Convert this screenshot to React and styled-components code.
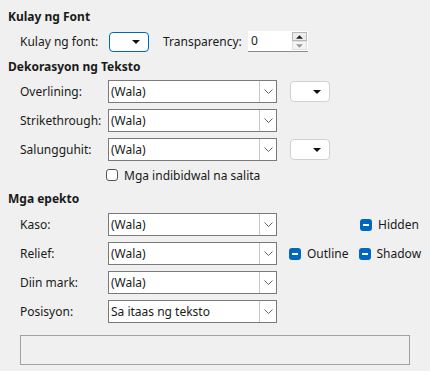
import React from "react"
import styled, { createGlobalStyle } from 'styled-components'

const GlobalStyle = createGlobalStyle`
    html, body {
        margin: 0;
        padding: 0;
        background: #f0f0f0;
    }
    body {
        font-family: "Noto Sans", "Open Sans", sans-serif;
        font-size: 12px;
        color: #1a1a1a;
    }
`

const Panel = styled.div`
    width: 430px;
    height: 371px;
    box-sizing: border-box;
    padding: 9px 20px 0 8px;
    display: flex;
    flex-direction: column;
`

const Heading = styled.div`
    font-weight: bold;
    height: 16px;
    line-height: 16px;
    margin-top: ${p => p.$top || 0}px;
`

const Rows = styled.div`
    display: flex;
    flex-direction: column;
    gap: ${p => p.$gap ?? 6}px;
    padding-left: 12px;
    margin-top: ${p => p.$top || 0}px;
`

const Row = styled.div`
    display: grid;
    grid-template-columns: 88px 169px auto;
    align-items: center;
    height: ${p => p.$h || 23}px;
`

const Label = styled.span`
    line-height: 16px;
`

const Extra = styled.div`
    display: flex;
    align-items: center;
    margin-left: ${p => p.$left || 13}px;
    gap: 10px;
`

const Combo = styled.div`
    box-sizing: border-box;
    height: 23px;
    border: 1px solid #7a7a7a;
    background: #fff;
    display: flex;
    align-items: stretch;
`

const ComboText = styled.span`
    flex: 1;
    padding-left: 2px;
    line-height: 21px;
    white-space: nowrap;
`

const ComboButton = styled.div`
    width: 17px;
    box-sizing: border-box;
    border-left: 1px solid #c8c8c8;
    display: flex;
    align-items: center;
    justify-content: center;
    background: #fff;
`

const ColorButton = styled.div`
    box-sizing: border-box;
    width: 40px;
    height: ${p => p.$h || 21}px;
    border: 1px solid ${p => p.$focus ? '#0067c0' : '#d0d0d0'};
    border-radius: 4px;
    background: #fff;
    display: flex;
    align-items: center;
    justify-content: flex-end;
    padding-right: 8px;
`

const FontRow = styled.div`
    display: flex;
    align-items: center;
    height: 21px;
    padding-left: 12px;
    margin-top: 6px;
`

const FontLabel = styled.span`
    width: 89px;
`

const TransLabel = styled.span`
    margin-left: 14px;
    width: 85px;
`

const Spin = styled.div`
    box-sizing: border-box;
    width: 60px;
    height: 21px;
    background: #fff;
    border-bottom: 1px solid #8a8a8a;
    display: flex;
`

const SpinValue = styled.span`
    flex: 1;
    padding-left: 3px;
    line-height: 20px;
`

const SpinButtons = styled.div`
    width: 16px;
    display: flex;
    flex-direction: column;
    padding: 1px 1px 1px 0;
    box-sizing: border-box;
`

const SpinHalf = styled.div`
    flex: 1;
    box-sizing: border-box;
    border: 1px solid ${p => p.$dim ? '#e0e0e0' : '#b8b8b8'};
    background: ${p => p.$dim ? '#f4f4f4' : '#ececec'};
    display: flex;
    align-items: center;
    justify-content: center;
`

const Check = styled.span`
    box-sizing: border-box;
    width: 12px;
    height: 12px;
    border: 1px solid #555;
    border-radius: 3px;
    background: #fff;
`

const TriCheck = styled.span`
    width: 12px;
    height: 12px;
    border-radius: 3px;
    background: #0067c0;
    display: flex;
    align-items: center;
    justify-content: center;
    &::after {
        content: "";
        width: 6px;
        height: 2px;
        background: #fff;
    }
`

const CheckLabel = styled.label`
    display: flex;
    align-items: center;
    gap: 6px;
    white-space: nowrap;
`

const CheckRow = styled.div`
    display: flex;
    align-items: center;
    height: 16px;
    padding-left: 98px;
    margin-top: 6px;
`

const Preview = styled.div`
    box-sizing: border-box;
    margin: 12px 0 0 12px;
    width: 390px;
    height: 30px;
    border: 1px solid #a0a0a0;
`

const Chevron = () => (
    <svg width="9" height="5" viewBox="0 0 9 5">
        <path d="M0.5 0.5 L4.5 4.5 L8.5 0.5" fill="none" stroke="#666" strokeWidth="1" />
    </svg>
)

const Caret = ({ color = '#111', w = 8, h = 4 }) => (
    <svg width={w} height={h} viewBox="0 0 8 4">
        <path d="M0 0 H8 L4 4 Z" fill={color} />
    </svg>
)

const CaretUp = () => (
    <svg width="7" height="4" viewBox="0 0 8 4">
        <path d="M0 4 H8 L4 0 Z" fill="#222" />
    </svg>
)

const Select = ({ value }) => (
    <Combo>
        <ComboText>{value}</ComboText>
        <ComboButton><Chevron /></ComboButton>
    </Combo>
)

const App = () => {
    return (
        <Panel>
            <GlobalStyle />
            <Heading>Kulay ng Font</Heading>
            <FontRow>
                <FontLabel>Kulay ng font:</FontLabel>
                <ColorButton $focus $h={20}><Caret /></ColorButton>
                <TransLabel>Transparency:</TransLabel>
                <Spin>
                    <SpinValue>0</SpinValue>
                    <SpinButtons>
                        <SpinHalf><CaretUp /></SpinHalf>
                        <SpinHalf $dim><Caret color="#999" w={7} /></SpinHalf>
                    </SpinButtons>
                </Spin>
            </FontRow>

            <Heading $top={7}>Dekorasyon ng Teksto</Heading>
            <Rows $top={5}>
                <Row>
                    <Label>Overlining:</Label>
                    <Select value="(Wala)" />
                    <Extra><ColorButton><Caret /></ColorButton></Extra>
                </Row>
                <Row>
                    <Label>Strikethrough:</Label>
                    <Select value="(Wala)" />
                </Row>
                <Row>
                    <Label>Salungguhit:</Label>
                    <Select value="(Wala)" />
                    <Extra><ColorButton><Caret /></ColorButton></Extra>
                </Row>
            </Rows>
            <CheckRow>
                <CheckLabel><Check />Mga indibidwal na salita</CheckLabel>
            </CheckRow>

            <Heading $top={8}>Mga epekto</Heading>
            <Rows $top={6}>
                <Row>
                    <Label>Kaso:</Label>
                    <Select value="(Wala)" />
                    <Extra $left={83}><CheckLabel><TriCheck />Hidden</CheckLabel></Extra>
                </Row>
                <Row>
                    <Label>Relief:</Label>
                    <Select value="(Wala)" />
                    <Extra $left={12}>
                        <CheckLabel><TriCheck />Outline</CheckLabel>
                        <CheckLabel><TriCheck />Shadow</CheckLabel>
                    </Extra>
                </Row>
                <Row>
                    <Label>Diin mark:</Label>
                    <Select value="(Wala)" />
                </Row>
                <Row>
                    <Label>Posisyon:</Label>
                    <Select value="Sa itaas ng teksto" />
                </Row>
            </Rows>
            <Preview />
        </Panel>
    )
}

export default App
